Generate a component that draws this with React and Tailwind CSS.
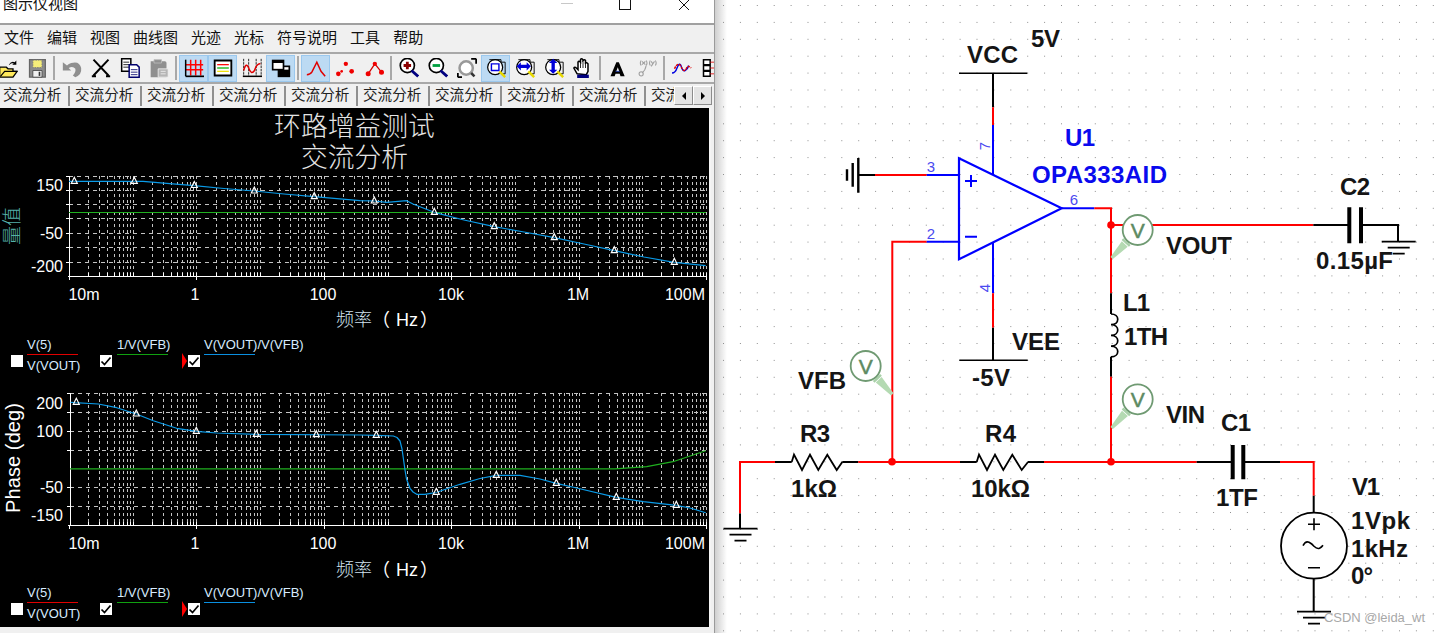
import React from "react";

const MENU = ["文件", "编辑", "视图", "曲线图", "光迹", "光标", "符号说明", "工具", "帮助"];

/* ---------- toolbar icons (24x24 drawings) ---------- */
const I = {
  open: (
    <g>
      <path d="M2 11 h8 l2 2 h6 v3 h5 l-5 7 H2z" fill="#ffe95c" stroke="#000" strokeWidth="1.6" />
      <path d="M3 22 l5-6 h15" fill="none" stroke="#000" strokeWidth="1.4" />
      <path d="M13 8 q3-5 7-3 l2-2 v5 h-5 l2-1.500 q-3-1-5 1.500z" fill="#000" />
    </g>
  ),
  save: (
    <g>
      <path d="M3 2 h19 v21 H3z" fill="#8c8c8c" stroke="#666" strokeWidth="1.500" />
      <path d="M7 2.500 h11 v9 h-11z" fill="#f6ee7a" stroke="#777" strokeDasharray="2 1" />
      <path d="M7 15 h11 v8 H7z" fill="#f0f0f0" stroke="#444" />
      <path d="M15 16.500 v5" stroke="#333" strokeWidth="2" />
    </g>
  ),
  undo: (
    <path d="M1 5 v10 h10 l-3-3 q5-3 8 1 q1 4-3 8 l3 2 q8-3 7-11 q-2-9-12-6 q-3 1-5 3z" fill="#8f8f8f" />
  ),
  cut: (
    <path d="M3 2 L21 21 M21 2 L3 21 M1 22 h5 M18 22 h5" fill="none" stroke="#000" strokeWidth="2.400" />
  ),
  copy: (
    <g>
      <path d="M2 1 h11 v15 H2z" fill="#fff" stroke="#000" strokeWidth="1.800" />
      <path d="M4 5 h7 M4 8 h7 M4 11 h7" stroke="#000" />
      <path d="M11 8 h9 l3 3 v12 H11z" fill="#fff" stroke="#00006e" strokeWidth="1.800" />
      <path d="M13 14 h8 M13 17 h8 M13 20 h8" stroke="#00006e" />
    </g>
  ),
  paste: (
    <g>
      <path d="M2 4 h17 q2 0 2 2 v17 H2z" fill="#8f8f8f" />
      <path d="M6 2 h9 v4 H6z" fill="#8f8f8f" stroke="#bdbdbd" />
      <path d="M11 13 h12 v10 H11z" fill="#b5b5b5" stroke="#f0f0f0" />
      <path d="M14 16 h6 M14 19 h6" stroke="#f0f0f0" />
    </g>
  ),
  grid: (
    <g>
      <path d="M8 2 v19 M14 2 v19 M20 2 v19 M2 8 h21 M2 14 h21" stroke="#ff0000" strokeWidth="1.800" fill="none" />
      <path d="M2 22 h22" stroke="#000" strokeWidth="2" fill="none" />
      <path d="M2 2 v20" stroke="#000" strokeWidth="1.800" fill="none" />
    </g>
  ),
  legend: (
    <g>
      <path d="M2 3 h20 v18 H2z" fill="#fff" stroke="#000" strokeWidth="2.200" />
      <path d="M5 8 h14" stroke="#ff0000" strokeWidth="1.500" />
      <path d="M5 12 h14" stroke="#00b000" strokeWidth="1.500" />
      <path d="M5 16 h14" stroke="#f0e000" strokeWidth="1.500" />
    </g>
  ),
  chart: (
    <g>
      <path d="M2 1 v21 M8 1 v21 M17 1 v21 M23 1 v21" stroke="#000" strokeWidth="1" fill="none" strokeDasharray="3 1" />
      <path d="M1 22 h23" stroke="#000" strokeWidth="1.800" />
      <path d="M2 15 q3-11 6-3 q3 9 7 3 q3-9 7-8" stroke="#e00000" strokeWidth="1.800" fill="none" />
    </g>
  ),
  overlap: (
    <g>
      <path d="M8 9 h15 v14 H8z" fill="#000" />
      <path d="M1 2 h15 v13 H1z" fill="#000" />
      <path d="M3 6 h11 v7 H3z" fill="#fff" />
      <path d="M16 11 h5 v3 h-5z" fill="#fff" />
    </g>
  ),
  peak: <path d="M1 20 q4 0 6-3 l6-12 l5 11 l5 6" fill="none" stroke="#e00000" strokeWidth="1.800" />,
  dots: (
    <g fill="#f00000">
      <circle cx="4" cy="19" r="2.800" />
      <circle cx="8" cy="16" r="1.600" />
      <circle cx="13" cy="7" r="2.600" />
      <circle cx="20" cy="16" r="2.800" />
    </g>
  ),
  lineDots: (
    <g>
      <path d="M5 19 L13 7 L21 17" fill="none" stroke="#d00000" strokeWidth="1.500" />
      <g fill="#f00000">
        <circle cx="5" cy="19" r="3" />
        <circle cx="13" cy="7" r="2.600" />
        <circle cx="21" cy="17" r="3" />
      </g>
    </g>
  ),
  zoomIn: (
    <g>
      <circle cx="10" cy="9" r="8.500" fill="#fff" stroke="#000" strokeWidth="2" />
      <path d="M10 4.500 v9 M5.500 9 h9" stroke="#8b0000" strokeWidth="3.400" />
      <path d="M15 15 l8 7" stroke="#000080" strokeWidth="3.400" />
    </g>
  ),
  zoomOut: (
    <g>
      <circle cx="10" cy="9" r="8.500" fill="#fff" stroke="#000" strokeWidth="2" />
      <path d="M5.500 9 h9" stroke="#00a040" strokeWidth="3.400" />
      <path d="M15 15 l8 7" stroke="#000080" strokeWidth="3.400" />
    </g>
  ),
  zoomFit: (
    <g>
      <circle cx="11" cy="12" r="8" fill="#fff" stroke="#999" strokeWidth="3" />
      <path d="M17 18 l4 4" stroke="#333" strokeWidth="3" />
      <path d="M1 23 h5 M1 23 v-5 M23 1 h-6 M23 1 v6" stroke="#000" strokeWidth="2.200" fill="none" />
    </g>
  ),
  zoomBox: (
    <g>
      <circle cx="11" cy="11" r="9" fill="#fff" stroke="#000" strokeWidth="1.500" />
      <path d="M6.500 7 h9 v8 h-9z" fill="#fff" stroke="#0000e0" strokeWidth="1.700" />
      <path d="M4 2 h14 v3 h5 v14 h-5" fill="none" stroke="#000" strokeWidth="1.100" />
      <path d="M16 16 l7 7" stroke="#e8d800" strokeWidth="3" />
    </g>
  ),
  zoomX: (
    <g>
      <circle cx="11" cy="11" r="9" fill="#fff" stroke="#000" strokeWidth="1.500" />
      <path d="M4 2 h14 v3 h5 v14 h-5" fill="none" stroke="#000" strokeWidth="1.100" />
      <path d="M2 10 l5-5 v3 h7 v-3 l5 5 l-5 5 v-3 h-7 v3z" fill="#0000d8" />
      <path d="M16 16 l7 7" stroke="#e8d800" strokeWidth="3" />
    </g>
  ),
  zoomY: (
    <g>
      <circle cx="11" cy="11" r="9" fill="#fff" stroke="#000" strokeWidth="1.500" />
      <path d="M4 2 h14 v3 h5 v14 h-5" fill="none" stroke="#000" strokeWidth="1.100" />
      <path d="M11 1 l5 5 h-3 v8 h3 l-5 5 l-5-5 h3 v-8 h-3z" fill="#0000d8" />
      <path d="M16 16 l7 7" stroke="#e8d800" strokeWidth="3" />
    </g>
  ),
  hand: (
    <g>
      <path d="M5 19 L1 12 q1-2 3 0 l2 2 V5 q1-2 3 0 V2 q1-2 3 0 V3 q2-2 3 0 v3 q2-1 3 1 v9 l-2 4z" fill="#fff" stroke="#000" strokeWidth="1.800" />
      <path d="M9 5 v7 M12 3 v9 M15 5 v7" stroke="#000" strokeWidth="1" />
      <path d="M5 20 h14 v4 H5z" fill="#000080" />
    </g>
  ),
  labelA: (
    <g>
      <path d="M3 22 L10 5 h3 l7 17 h-5 l-1-3 h-5 l-1 3z M10 16 h3.500 l-1.800-5z" fill="#000" fillRule="evenodd" />
      <path d="M9 16 h5" stroke="#2040c0" />
    </g>
  ),
  xy: (
    <g fill="none" stroke="#a0a0a0" strokeWidth="1.300">
      <path d="M5 3 q-2 3 0 6 M11 3 q2 3 0 6 M6 4 l4 4 M10 4 l-4 4 M16 3 q-2 3 0 6 M22 3 q2 3 0 6 M17 4 l2 3 l2-3 M19 7 l-2 3" />
      <path d="M11 9 q-1 6-5 9" />
      <circle cx="5" cy="19" r="2.500" />
    </g>
  ),
  wave: (
    <g fill="none" strokeWidth="1.700">
      <path d="M0 18 q4 0 6-6 q3-8 5-2 q2 7 5 5 q3-2 4-6" stroke="#0000e0" />
      <path d="M3 13 q4-9 8-3 q3 8 6 3 q2-5 6-1" stroke="#e00000" strokeDasharray="3 1" />
    </g>
  ),
  more: (
    <g>
      <path d="M3 2 h8 v6 H3z M3 9 h8 v6 H3z M3 16 h8 v6 H3z" fill="#fff" stroke="#000" strokeWidth="1.800" />
      <path d="M11 5 h8 M11 12 h8 M11 19 h8" stroke="#e00000" />
    </g>
  ),
};

function Tool({ icon, on }) {
  return (
    <div
      className={
        "flex h-[27px] w-[29px] shrink-0 items-center justify-center border " +
        (on ? "border-[#9bc8ee] bg-[#bcdaf3]" : "border-transparent")
      }
    >
      <svg width="20" height="20" viewBox="0 0 24 24">
        {I[icon]}
      </svg>
    </div>
  );
}

function Sep() {
  return (
    <div className="flex h-[27px] w-[6px] shrink-0 items-center justify-center">
      <div className="h-[24px] w-[2px] bg-[#a8a8a8]" />
    </div>
  );
}

function ScrollBtn({ dir }) {
  return (
    <div className="flex h-[19px] w-[19px] items-center justify-center border border-b-[#8c8c8c] border-l-white border-r-[#8c8c8c] border-t-white bg-[#e4e4e4]">
      <svg width="8" height="10" viewBox="0 0 8 10">
        <path d={dir === "l" ? "M6 1 L2 5 L6 9z" : "M2 1 L6 5 L2 9z"} fill="#000" />
      </svg>
    </div>
  );
}

/* ---------- plot ---------- */
const DEC = 63.7;
const X0 = 69;
const MINOR = [];
for (let d = 0; d < 10; d++) {
  for (let m = 2; m <= 10; m++) {
    MINOR.push(X0 + DEC * (d + Math.log10(m)));
  }
}
const line = (p) => p.map((q) => q.join(",")).join(" ");

function Plot({ y0, h, top, bottom, rows, axisX, green, blue, marks, xLabelY, titleY, yLabels, children }) {
  return (
    <svg width="709" height={h} viewBox={`0 ${y0} 709 ${h}`} className="block">
      <g shapeRendering="crispEdges" stroke="#c4c4c4" strokeWidth="1" strokeDasharray="3 3">
        {MINOR.map((x, i) => (
          <line key={i} x1={Math.round(x) + 0.5} x2={Math.round(x) + 0.5} y1={top} y2={bottom} />
        ))}
      </g>
      <g shapeRendering="crispEdges" stroke="#c4c4c4" strokeWidth="1" strokeDasharray="4 4">
        {rows.map((y) => (
          <line key={y} x1={axisX} x2="706" y1={Math.round(y) + 0.5} y2={Math.round(y) + 0.5} />
        ))}
      </g>
      <g shapeRendering="crispEdges" stroke="#ffffff" strokeWidth="1">
        <line x1={axisX + 0.5} x2={axisX + 0.5} y1={top} y2={bottom} />
        <line x1="68" x2="706" y1={bottom + 0.5} y2={bottom + 0.5} />
        {MINOR.map((x, i) => (
          <line key={i} x1={Math.round(x) + 0.5} x2={Math.round(x) + 0.5} y1={bottom - 3} y2={bottom + 1} />
        ))}
        {[0, 2, 4, 6, 8, 10].map((d) => (
          <line key={d} x1={Math.round(X0 + DEC * d) + 0.5} x2={Math.round(X0 + DEC * d) + 0.5} y1={bottom} y2={bottom + 4} />
        ))}
        {rows.map((y) => (
          <line key={y} x1={axisX - 3} x2={axisX} y1={Math.round(y) + 0.5} y2={Math.round(y) + 0.5} />
        ))}
      </g>
      <polyline points={line(green)} fill="none" stroke="#1fb01f" strokeWidth="1.200" />
      <polyline points={line(blue)} fill="none" stroke="#0a9be8" strokeWidth="1.200" strokeLinejoin="round" />
      {marks.map(([x, y], i) => (
        <path key={i} d={`M${x} ${y - 4} L${x + 3} ${y + 2} H${x - 3}z`} fill="#000000" fillOpacity="0.3" stroke="#ffffff" strokeWidth="1.200" />
      ))}
      {yLabels.map(([t, y]) => (
        <text key={t} x="63" y={y} textAnchor="end" className="fill-white text-[16px]">
          {t}
        </text>
      ))}
      <text x="84" y={xLabelY} textAnchor="middle" className="fill-white text-[16px]">10m</text>
      <text x="195" y={xLabelY} textAnchor="middle" className="fill-white text-[16px]">1</text>
      <text x="323" y={xLabelY} textAnchor="middle" className="fill-white text-[16px]">100</text>
      <text x="451" y={xLabelY} textAnchor="middle" className="fill-white text-[16px]">10k</text>
      <text x="578" y={xLabelY} textAnchor="middle" className="fill-white text-[16px]">1M</text>
      <text x="705" y={xLabelY} textAnchor="end" className="fill-white text-[16px]">100M</text>
      <text x="336" y={titleY} className="fill-[#cfe0ee] text-[18px] font-light">频率</text>
      <text y={titleY} className="fill-white text-[18px] [text-spacing-trim:space-all]">
        <tspan x="372">（</tspan>
        <tspan x="396">Hz</tspan>
        <tspan x="420">）</tspan>
      </text>
      {children}
    </svg>
  );
}

function Box({ checked }) {
  return (
    <div className="mt-[20px] flex h-[12px] w-[12px] shrink-0 items-center justify-center bg-white">
      {checked && (
        <svg width="12" height="12" viewBox="0 0 12 12">
          <path d="M1.500 6.500 L4.500 9.500 L10.500 2.500" fill="none" stroke="#000" strokeWidth="1.700" />
        </svg>
      )}
    </div>
  );
}

function Trace({ name, sub, width, bar }) {
  return (
    <div className="shrink-0 pt-[2px] text-[13px] leading-[15px] text-[#d8ecff]" style={{ width }}>
      <div className="whitespace-nowrap">{name}</div>
      <div className={"mt-[2px] h-[1px] w-[51px] " + bar} />
      {sub && <div className="mt-[3px] whitespace-nowrap">{sub}</div>}
    </div>
  );
}

function Legend() {
  return (
    <div className="flex h-[40px] items-start pl-[11px]">
      <Box />
      <div className="w-[4px]" />
      <Trace name="V(5)" sub="V(VOUT)" width="73px" bar="bg-[#e00000]" />
      <Box checked />
      <div className="w-[5px]" />
      <Trace name="1/V(VFB)" width="65px" bar="bg-[#10a010]" />
      <svg width="6" height="16" viewBox="0 0 6 16" className="mt-[18px] shrink-0">
        <path d="M0 0 L5 8 L0 16z" fill="#ff0000" />
      </svg>
      <Box checked />
      <div className="w-[4px]" />
      <Trace name="V(VOUT)/V(VFB)" width="110px" bar="bg-[#0a8fe0]" />
    </div>
  );
}

const BLUE1 = [[69,181.3],[143,181.3],[166.700,183.300],[194,185.700],[224,188.500],[254,191],[284,194],[314,196.700],[360,200.700],[374,201],[386.700,202.300],[406.700,200.700],[413,204],[434,212.300],[464,220],[494.300,226.700],[524,232],[554.300,237.700],[584,244],[614.300,250.700],[644,257],[674.300,262.300],[705.700,265.700]];
const MARK1 = [[74.3,181.3],[134.3,181.3],[194.3,185.5],[254.3,191],[314.3,196.7],[374.3,201],[434.3,212.3],[494.3,226.7],[554.3,237.7],[614.3,250.7],[674.3,262.3]];
const BLUE2 = [[70.7,402.3],[98.300,404],[116.700,407.700],[136.300,414],[153.300,420.700],[176.700,428.300],[196.300,431.300],[216.700,433],[256.700,434.300],[360,435],[376.700,435.300],[393.300,436],[397,437.500],[400,441],[402,449],[403.300,458],[405,470],[406.500,479],[410,488.300],[413,492],[416.700,494.300],[425,494.300],[436.700,492.300],[460,484.300],[480,478.500],[496.300,475.300],[520,475.300],[540,479],[556.300,483.300],[576.700,488],[616.300,497.300],[643.300,501.700],[676.300,505.300],[690,508],[705.700,512.700]];
const MARK2 = [[76.3,402.3],[136.3,414],[196.3,431.3],[256.3,434.3],[316.3,434.7],[376.3,435.3],[436.3,492.3],[496.3,475.3],[556.3,483.3],[616.3,497.3],[676.3,505.3]];

/* ---------- schematic ---------- */
function Wire({ d, c = "red", w = 2 }) {
  const cls = { red: "stroke-[#ff0000]", blue: "stroke-[#0000ff]", black: "stroke-black" }[c];
  return <path d={d} fill="none" strokeWidth={w} className={cls} />;
}

function Lbl({ x, y, w, c, children }) {
  return (
    <text
      x={x}
      y={y + 0.5}
      textLength={w}
      lengthAdjust="spacing"
      className={"text-[24px] font-bold " + (c === "blue" ? "fill-[#0a0aee]" : "fill-[#151515]")}
    >
      {children}
    </text>
  );
}

function Pin({ x, y, r, children }) {
  return (
    <text
      x={x}
      y={y}
      textAnchor="middle"
      transform={r ? `rotate(-90 ${x} ${y})` : undefined}
      className="fill-[#4a4af0] text-[15px]"
    >
      {children}
    </text>
  );
}

function Probe({ cx, cy, tx, ty }) {
  const dx = tx - cx;
  const dy = ty - cy;
  const len = Math.hypot(dx, dy);
  const ux = dx / len;
  const uy = dy / len;
  const sx = cx + ux * 17;
  const sy = cy + uy * 17;
  const bx = sx + ux * 2;
  const by = sy + uy * 2;
  return (
    <g>
      <path
        d={`M${sx - uy * 5} ${sy + ux * 5} L${sx + uy * 5} ${sy - ux * 5}`}
        stroke="#a8d0a8"
        strokeWidth="2.500"
        fill="none"
      />
      <path
        d={`M${bx - uy * 4} ${by + ux * 4} L${bx + uy * 4} ${by - ux * 4} L${tx + uy * 1.6} ${ty - ux * 1.6} L${tx - uy * 1.6} ${ty + ux * 1.6}z`}
        fill="#b4dab2"
      />
      <circle cx={cx} cy={cy} r="15" fill="#ffffff" stroke="#6f9a72" strokeWidth="1.800" />
      <text x={cx} y={cy + 7.500} textAnchor="middle" className="fill-[#5d8a62] stroke-[#5d8a62] text-[21px]" strokeWidth="0.500">V</text>
    </g>
  );
}

function Gnd({ x, y }) {
  return (
    <Wire c="black" w={1.8} d={`M${x - 17} ${y} h34 M${x - 11} ${y + 6} h22 M${x - 6} ${y + 12} h12`} />
  );
}

export default function App() {
  return (
    <div className="flex h-[633px] w-[1441px] overflow-hidden bg-white font-['Liberation_Sans','Noto_Sans_CJK_SC',sans-serif]">
      {/* instrument window */}
      <div className="flex h-[633px] w-[715px] shrink-0 flex-col overflow-hidden border-r border-[#9a9a9a] bg-[#f0f0f0]">
        <div className="relative h-[25px] shrink-0 border-b-2 border-[#a0a0a0] bg-white">
          <div className="absolute left-[3px] top-[-6px] text-[15px] leading-[20px] text-[#111]">图示仪视图</div>
          <div className="absolute left-[561px] top-[3px] h-[1px] w-[12px] bg-[#c8c8c8]" />
          <div className="absolute left-[619px] top-[-3px] h-[13px] w-[12px] border border-[#111]" />
          <svg width="14" height="12" viewBox="0 0 14 12" className="absolute left-[677px] top-[-1px]">
            <path d="M1 0 L12 11 M13 0 L2 11" stroke="#111" strokeWidth="1" />
          </svg>
        </div>
        <div className="flex h-[29px] shrink-0 items-center gap-[13px] border-b-2 border-[#a8a8a8] pl-[4px] text-[15px] text-[#111]">
          {MENU.map((m) => (
            <span key={m}>{m}</span>
          ))}
        </div>
        <div className="flex h-[30px] shrink-0 items-center overflow-hidden border-b-2 border-[#a8a8a8]">
          <div className="ml-[-7px] flex items-center">
            <Tool icon="open" />
            <Tool icon="save" />
            <Sep />
            <Tool icon="undo" />
            <Tool icon="cut" />
            <Tool icon="copy" />
            <Tool icon="paste" />
            <Sep />
            <Tool icon="grid" on />
            <Tool icon="legend" on />
            <Tool icon="chart" />
            <Tool icon="overlap" on />
            <Sep />
            <Tool icon="peak" on />
            <Tool icon="dots" />
            <Tool icon="lineDots" />
            <Sep />
            <Tool icon="zoomIn" />
            <Tool icon="zoomOut" />
            <Tool icon="zoomFit" />
            <Tool icon="zoomBox" on />
            <Tool icon="zoomX" />
            <Tool icon="zoomY" />
            <Tool icon="hand" />
            <Sep />
            <Tool icon="labelA" />
            <Tool icon="xy" />
            <Sep />
            <Tool icon="wave" />
            <Tool icon="more" />
          </div>
        </div>
        <div className="relative flex h-[24px] shrink-0 overflow-hidden pt-[2px]">
          {Array.from({ length: 10 }).map((_, i) => (
            <div
              key={i}
              className="mr-[2px] flex h-[20px] w-[70px] shrink-0 items-center overflow-hidden whitespace-nowrap border-r-2 border-[#8f8f8f] pl-[3px] text-[14.600px] text-[#222]"
            >
              交流分析
            </div>
          ))}
          <div className="absolute left-[674px] top-[2px] flex bg-[#f0f0f0]">
            <ScrollBtn dir="l" />
            <ScrollBtn dir="r" />
          </div>
        </div>
        {/* black plot area */}
        <div className="flex h-[519px] w-[711px] shrink-0 flex-col overflow-hidden border-r-2 border-[#f4f4f4] bg-black">
          <div className="h-[60px] shrink-0 pt-[4px] text-center text-[26.800px] font-light leading-[31px] text-[#e4e4e4]">
            <div>环路增益测试</div>
            <div>交流分析</div>
          </div>
          <Plot
            y0={168}
            h={167}
            top={176}
            bottom={276}
            axisX={69}
            rows={[176, 190, 204, 218, 233, 247, 262]}
            green={[[69, 212.5], [706, 212.5]]}
            blue={BLUE1}
            marks={MARK1}
            xLabelY={300}
            titleY={326}
            yLabels={[["150", 191], ["-50", 239], ["-200", 272]]}
          >
            <text x="19" y="245" transform="rotate(-90 19 245)" className="fill-[#55b0aa] text-[19px] font-light">量值</text>
          </Plot>
          <Legend />
          <Plot
            y0={375}
            h={208}
            top={393}
            bottom={525}
            axisX={70}
            rows={[393, 412, 431, 450, 487, 506]}
            green={[[70, 468.8], [615, 468.8], [646.7, 466.7], [673, 461.7], [705.7, 450.7]]}
            blue={BLUE2}
            marks={MARK2}
            xLabelY={549}
            titleY={576}
            yLabels={[["200", 409], ["100", 437], ["-50", 493], ["-150", 521]]}
          >
            <text x="20" y="513" textLength="110" transform="rotate(-90 20 513)" className="fill-white text-[20px]">Phase (deg)</text>
          </Plot>
          <Legend />
        </div>
      </div>

      {/* schematic canvas */}
      <div className="relative h-[633px] flex-1">
        <div className="absolute left-0 top-0 h-full w-[12px] bg-gradient-to-r from-[#cfcfcf] to-white" />
        <svg width="726" height="633" viewBox="715 0 726 633" className="absolute left-0 top-0">
          <defs>
            <pattern id="dots" x="723" y="5" width="16.900" height="16.900" patternUnits="userSpaceOnUse">
              <rect x="0" y="0" width="1" height="1" fill="#8e8e8e" />
            </pattern>
          </defs>
          <rect x="715" y="0" width="726" height="633" fill="url(#dots)" />

          {/* op amp */}
          <Wire c="black" w={1.6} d="M959 73.300 H1027.300" />
          <Wire c="black" d="M993 73.300 V107.300" />
          <Wire c="red" d="M993 107.300 V125" />
          <Wire c="blue" d="M993 125 V175" />
          <Wire c="black" w={2.4} d="M858.300 158 V192.700 M852.700 163 V186.700 M847 169.300 V180.700" />
          <Wire c="black" d="M858.300 175 H875" />
          <Wire c="red" d="M875 175 H926.700" />
          <Wire c="blue" d="M926.700 175 H959" />
          <Wire c="red" d="M892.300 462 V241.700 H926.700" />
          <Wire c="blue" d="M926.700 241.700 H959" />
          <path d="M959 158.300 V259.300 L1061.700 208.300z" fill="none" strokeWidth="2.200" className="stroke-[#0000ff]" />
          <Wire c="blue" d="M965 181 H977 M971 175 V187 M965 236.700 H977" />
          <Wire c="blue" d="M1061.700 208.300 H1094.300" />
          <Wire c="red" d="M1094.300 208.300 H1111 V293.300" />
          <Wire c="blue" d="M993 243 V293.300" />
          <Wire c="red" d="M993 293.300 V327.700" />
          <Wire c="black" d="M993 327.700 V360.300" />
          <Wire c="black" w={1.6} d="M959.300 360.300 H1027.700" />

          {/* output branch */}
          <Wire c="red" d="M1111 225 H1313.300" />
          <Wire c="black" d="M1313.300 225 H1349.300 M1361 225 H1398 V241.700" />
          <Wire c="black" w={4} d="M1349.300 207.300 V243.300 M1361 207.300 V243.300" />
          <Gnd x={1398.700} y={241.700} />
          <Wire c="black" d="M1111 293.300 V314" />
          <Wire c="black" w={1.7} d="M1111 314 c9 0 9 10.700 0 10.700 c9 0 9 10.700 0 10.700 c9 0 9 10.700 0 10.700 c9 0 9 10.700 0 10.700" />
          <Wire c="black" d="M1111 356.700 V376.700" />
          <Wire c="red" d="M1111 376.700 V462" />

          {/* bottom rail */}
          <Wire c="black" d="M740 528.700 V513.300" />
          <Wire c="red" d="M740 513.300 V462 H775" />
          <Gnd x={740.500} y={528.700} />
          <Wire c="black" d="M775 462 H791.700 M842.300 462 H858.300" />
          <Wire c="black" w={1.8} d="M791.700 462 L794 454.700 L802 470 L810 454.700 L818.300 470 L827.300 454.700 L836.700 470 L842.300 462" />
          <Wire c="red" d="M858.300 462 H960" />
          <Wire c="black" d="M960 462 H976.700 M1028 462 H1044" />
          <Wire c="black" w={1.8} d="M976.700 462 L979 454.700 L987 470 L995 454.700 L1003.300 470 L1012.300 454.700 L1021.700 470 L1028 462" />
          <Wire c="red" d="M1044 462 H1196.700" />
          <Wire c="black" d="M1196.700 462 H1232.700 M1243.300 462 H1280" />
          <Wire c="black" w={4} d="M1232.700 445 V479.300 M1243.300 445 V479.300" />
          <Wire c="red" d="M1280 462 H1313.700 V495.700" />
          <Wire c="black" d="M1313.700 495.700 V512.400 M1313.700 578.700 V611.700" />
          <circle cx="1314" cy="545.700" r="33" fill="#ffffff" stroke="#000000" strokeWidth="1.800" />
          <Wire c="black" w={1.6} d="M1308 524.300 H1320 M1314 518.300 V530.300 M1308 567.700 H1320 M1303 545.700 q2.500-5 6-3.500 q3 1.500 5 4 q3 3 5.500 2 q2-1 3.500-3" />
          <Gnd x={1314} y={611.700} />

          {/* nodes */}
          <circle cx="1111" cy="225" r="3.800" fill="#ff0000" />
          <circle cx="892" cy="461.700" r="3.800" fill="#ff0000" />
          <circle cx="1111" cy="461.700" r="3.800" fill="#ff0000" />

          {/* probes */}
          <Probe cx={1137.700} cy={230} tx={1111.700} ty={258} />
          <Probe cx={1137.700} cy={399.300} tx={1111.700} ty={428} />
          <Probe cx={865.700} cy={366} tx={892.300} ty={394.300} />

          {/* pin numbers */}
          <Pin x={931} y={171.500}>3</Pin>
          <Pin x={931} y={239}>2</Pin>
          <Pin x={1074} y={205}>6</Pin>
          <Pin x={990} y={146} r>7</Pin>
          <Pin x={990} y={288} r>4</Pin>

          {/* labels */}
          <Lbl x={967} y={62} w={51}>VCC</Lbl>
          <Lbl x={1031} y={46} w={29}>5V</Lbl>
          <Lbl x={1065} y={145} w={30} c="blue">U1</Lbl>
          <Lbl x={1032} y={182.700} w={135} c="blue">OPA333AID</Lbl>
          <Lbl x={1340} y={194} w={30}>C2</Lbl>
          <Lbl x={1166} y={253} w={66}>VOUT</Lbl>
          <Lbl x={1316} y={268.700} w={77}>0.15µF</Lbl>
          <Lbl x={1123} y={310} w={27}>L1</Lbl>
          <Lbl x={1124} y={344} w={44}>1TH</Lbl>
          <Lbl x={1166} y={422.700} w={39}>VIN</Lbl>
          <Lbl x={1221} y={430} w={30}>C1</Lbl>
          <Lbl x={1216} y={505} w={42}>1TF</Lbl>
          <Lbl x={1352} y={494} w={28}>V1</Lbl>
          <Lbl x={1351} y={528} w={59}>1Vpk</Lbl>
          <Lbl x={1351} y={556} w={57}>1kHz</Lbl>
          <Lbl x={1351} y={583} w={22}>0°</Lbl>
          <Lbl x={798} y={388} w={48}>VFB</Lbl>
          <Lbl x={800} y={441.700} w={30}>R3</Lbl>
          <Lbl x={791} y={496.700} w={46}>1kΩ</Lbl>
          <Lbl x={985} y={441.700} w={31}>R4</Lbl>
          <Lbl x={971} y={496.700} w={59}>10kΩ</Lbl>
          <Lbl x={1012} y={349} w={48}>VEE</Lbl>
          <Lbl x={972} y={385.700} w={38}>-5V</Lbl>

          <text x="1324" y="622" textLength="101" className="fill-[#a8a8a8] text-[13px]">CSDN @leida_wt</text>
        </svg>
      </div>
    </div>
  );
}
